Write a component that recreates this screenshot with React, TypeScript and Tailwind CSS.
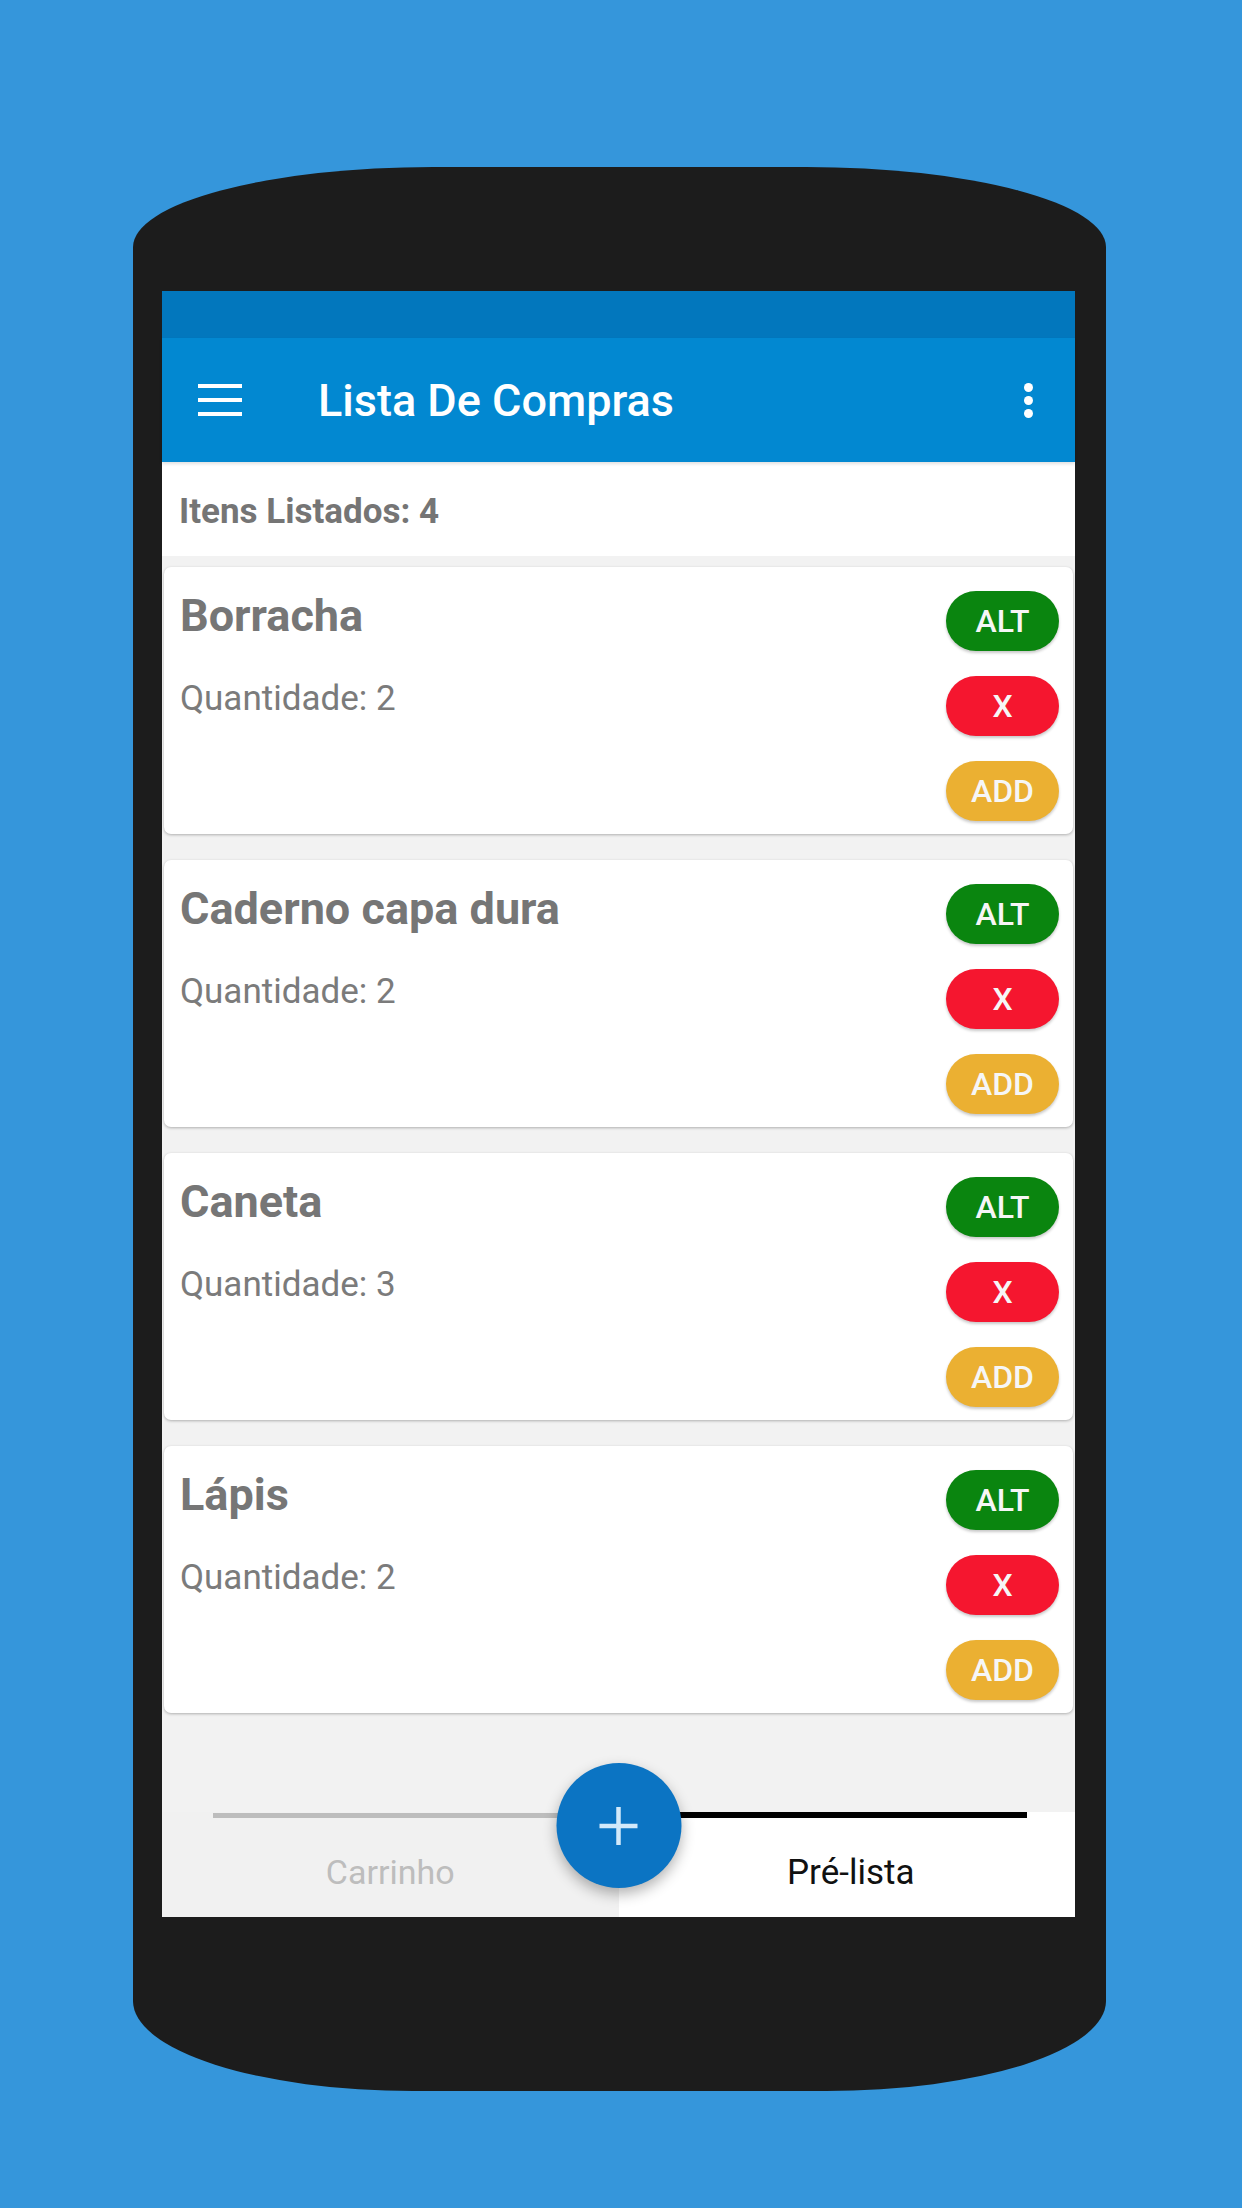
type Item = { name: string; qty: number };

const items: Item[] = [
  { name: "Borracha", qty: 2 },
  { name: "Caderno capa dura", qty: 2 },
  { name: "Caneta", qty: 3 },
  { name: "Lápis", qty: 2 },
];

const Pill = ({ label, color }: { label: string; color: string }) => (
  <button
    className={`w-[113px] h-[60px] rounded-full flex items-center justify-center text-[32px] leading-none font-medium text-[#f6f6f6] shadow-[0_2px_3px_rgba(0,0,0,0.22)] ${color}`}
  >
    {label}
  </button>
);

const ItemCard = ({ item }: { item: Item }) => (
  <div className="h-[267px] bg-white rounded-[7px] shadow-[0_1px_3px_rgba(0,0,0,0.28)] flex justify-between pl-[16px] pr-[14px] pt-[24px]">
    <div className="pt-[2px] flex flex-col">
      <div className="text-[45px] leading-[45px] font-bold text-[#767676]">{item.name}</div>
      <div className="mt-[43px] text-[35px] leading-[35px] text-[#7b7b7b]">
        Quantidade: {item.qty}
      </div>
    </div>
    <div className="flex flex-col gap-[25px]">
      <Pill label="ALT" color="bg-[#0a850f]" />
      <Pill label="X" color="bg-[#f5162f]" />
      <Pill label="ADD" color="bg-[#ebb032]" />
    </div>
  </div>
);

export default function App() {
  return (
    <div className="w-[1242px] h-[2208px] bg-[#3596db] pt-[167px] pl-[133px] overflow-hidden font-['Roboto',sans-serif]">
      {/* phone body */}
      <div className="w-[973px] h-[1924px] bg-[#1c1c1c] rounded-tl-[300px_80px] rounded-tr-[300px_80px] rounded-bl-[280px_90px] rounded-br-[280px_90px] pt-[124px] pl-[29px] pr-[31px]">
        {/* screen */}
        <div className="relative h-[1626px] bg-[#f2f2f2] flex flex-col">
          <div className="h-[47px] bg-[#0277bd]" />
          <div className="h-[124px] bg-[#0288d1] flex items-center shadow-[0_2px_3px_rgba(0,0,0,0.12)] z-10">
            <div className="ml-[36px] w-[44px] flex flex-col gap-[10px]">
              <div className="h-[4px] bg-white" />
              <div className="h-[4px] bg-white" />
              <div className="h-[4px] bg-white" />
            </div>
            <div className="ml-[76px] text-[45px] leading-[45px] font-medium text-white">
              Lista De Compras
            </div>
            <div className="ml-auto mr-[42px] flex flex-col gap-[4px]">
              <div className="w-[9px] h-[9px] rounded-full bg-white" />
              <div className="w-[9px] h-[9px] rounded-full bg-white" />
              <div className="w-[9px] h-[9px] rounded-full bg-white" />
            </div>
          </div>

          <div className="h-[94px] bg-white pl-[17px] pt-[32px] text-[35px] leading-[35px] font-bold text-[#757575]">
            Itens Listados: {items.length}
          </div>

          <div className="flex-1 px-[2px] pt-[11px] flex flex-col gap-[26px]">
            {items.map((it) => (
              <ItemCard key={it.name} item={it} />
            ))}
          </div>

          {/* tabs */}
          <div className="h-[105px] flex">
            <div className="flex-1 bg-[#f1f1f1] flex flex-col">
              <div className="mt-[1px] ml-[51px] h-[5px] bg-[#bdbdbd]" />
              <div className="flex-1 flex items-center justify-center pt-[8px] text-[34px] leading-[34px] text-[#bdbdbd]">
                Carrinho
              </div>
            </div>
            <div className="flex-1 bg-white flex flex-col">
              <div className="mr-[48px] h-[6px] bg-black" />
              <div className="flex-1 flex items-center justify-center pt-[10px] pl-[8px] text-[35px] leading-[35px] text-[#111111]">
                Pré-lista
              </div>
            </div>
          </div>

          {/* floating add button */}
          <button className="absolute left-1/2 -translate-x-1/2 bottom-[29px] w-[125px] h-[125px] rounded-full bg-[#0b74c3] shadow-[0_6px_14px_rgba(0,0,0,0.3)] flex items-center justify-center">
            <svg width="42" height="42" viewBox="0 0 42 42">
              <path d="M21 2v38M2 21h38" stroke="#d2e9fa" strokeWidth="4.5" />
            </svg>
          </button>
        </div>
      </div>
    </div>
  );
}
